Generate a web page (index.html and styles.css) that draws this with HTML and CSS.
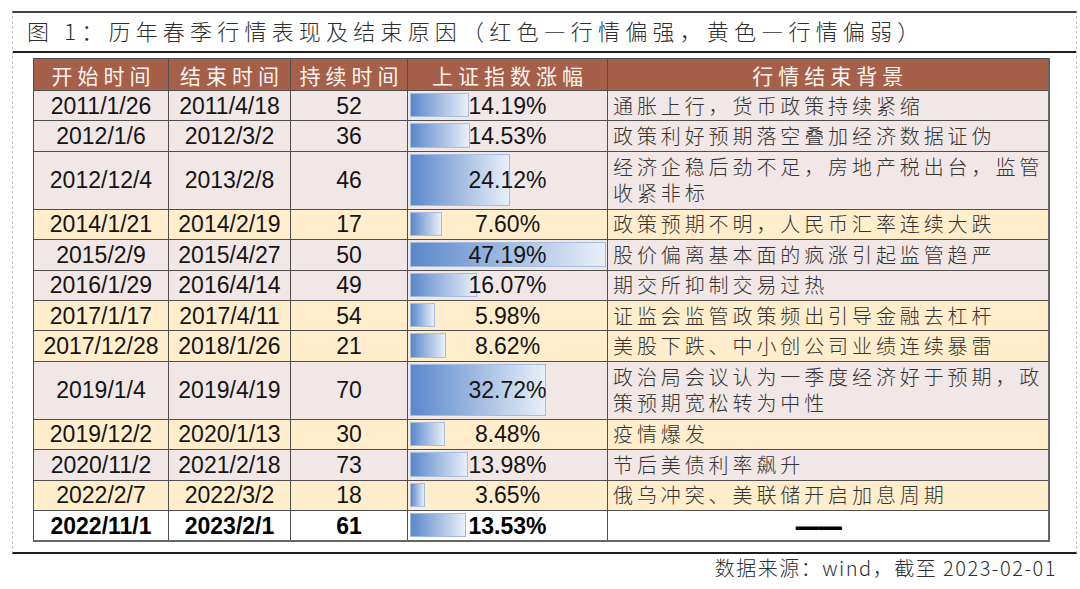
FILE: index.html
```html
<!DOCTYPE html>
<html lang="zh-CN">
<head>
<meta charset="utf-8">
<title>历年春季行情表现及结束原因</title>
<link rel="stylesheet" href="styles.css">
</head>
<body>
<div class="frame">
  <div class="title">图 1：历年春季行情表现及结束原因（红色—行情偏强，黄色—行情偏弱）</div>
  <div class="table-wrap">
    <table class="data">
      <colgroup>
        <col class="c1"><col class="c2"><col class="c3"><col class="c4"><col class="c5">
      </colgroup>
      <thead>
        <tr class="head">
          <th>开始时间</th><th>结束时间</th><th>持续时间</th><th>上证指数涨幅</th><th>行情结束背景</th>
        </tr>
      </thead>
      <tbody>
        <tr class="red"><td>2011/1/26</td><td>2011/4/18</td><td>52</td><td class="pct"><span class="bar" style="width:59px"></span><span class="val">14.19%</span></td><td class="desc">通胀上行，货币政策持续紧缩</td></tr>
        <tr class="red"><td>2012/1/6</td><td>2012/3/2</td><td>36</td><td class="pct"><span class="bar" style="width:60px"></span><span class="val">14.53%</span></td><td class="desc">政策利好预期落空叠加经济数据证伪</td></tr>
        <tr class="red tall"><td>2012/12/4</td><td>2013/2/8</td><td>46</td><td class="pct"><span class="bar" style="width:100px"></span><span class="val">24.12%</span></td><td class="desc">经济企稳后劲不足，房地产税出台，监管收紧非标</td></tr>
        <tr class="yellow"><td>2014/1/21</td><td>2014/2/19</td><td>17</td><td class="pct"><span class="bar" style="width:32px"></span><span class="val">7.60%</span></td><td class="desc">政策预期不明，人民币汇率连续大跌</td></tr>
        <tr class="red"><td>2015/2/9</td><td>2015/4/27</td><td>50</td><td class="pct"><span class="bar" style="width:196px"></span><span class="val">47.19%</span></td><td class="desc">股价偏离基本面的疯涨引起监管趋严</td></tr>
        <tr class="red"><td>2016/1/29</td><td>2016/4/14</td><td>49</td><td class="pct"><span class="bar" style="width:67px"></span><span class="val">16.07%</span></td><td class="desc">期交所抑制交易过热</td></tr>
        <tr class="yellow"><td>2017/1/17</td><td>2017/4/11</td><td>54</td><td class="pct"><span class="bar" style="width:25px"></span><span class="val">5.98%</span></td><td class="desc">证监会监管政策频出引导金融去杠杆</td></tr>
        <tr class="yellow"><td>2017/12/28</td><td>2018/1/26</td><td>21</td><td class="pct"><span class="bar" style="width:36px"></span><span class="val">8.62%</span></td><td class="desc">美股下跌、中小创公司业绩连续暴雷</td></tr>
        <tr class="red tall"><td>2019/1/4</td><td>2019/4/19</td><td>70</td><td class="pct"><span class="bar" style="width:136px"></span><span class="val">32.72%</span></td><td class="desc">政治局会议认为一季度经济好于预期，政策预期宽松转为中性</td></tr>
        <tr class="yellow"><td>2019/12/2</td><td>2020/1/13</td><td>30</td><td class="pct"><span class="bar" style="width:35px"></span><span class="val">8.48%</span></td><td class="desc">疫情爆发</td></tr>
        <tr class="red"><td>2020/11/2</td><td>2021/2/18</td><td>73</td><td class="pct"><span class="bar" style="width:58px"></span><span class="val">13.98%</span></td><td class="desc">节后美债利率飙升</td></tr>
        <tr class="yellow"><td>2022/2/7</td><td>2022/3/2</td><td>18</td><td class="pct"><span class="bar" style="width:15px"></span><span class="val">3.65%</span></td><td class="desc">俄乌冲突、美联储开启加息周期</td></tr>
        <tr class="current"><td>2022/11/1</td><td>2023/2/1</td><td>61</td><td class="pct"><span class="bar" style="width:56px"></span><span class="val">13.53%</span></td><td class="dash">——</td></tr>
      </tbody>
    </table>
  </div>
</div>
<div class="source">数据来源：wind，截至 2023-02-01</div>
</body>
</html>
```

FILE: styles.css
```css
html, body {
  margin: 0;
  padding: 0;
  background: #ffffff;
}

body {
  padding: 11px 0 0 12px;
}

.frame {
  width: 1063px;
  border-top: 2px solid #444;
  border-bottom: 2px solid #1e1e1e;
  border-left: 1px dashed #c4c4c4;
  border-right: 1px dashed #c4c4c4;
}

.title {
  height: 38px;
  line-height: 35px;
  padding-left: 14px;
  font-family: "Noto Sans CJK SC", "Noto Sans", sans-serif;
  font-weight: 300;
  font-size: 22px;
  letter-spacing: 5.2px;
  color: #2e2e2e;
  border-bottom: 2px solid #1e1e1e;
  white-space: nowrap;
}

.table-wrap {
  padding: 5px 0 10px 20px;
}

.data {
  border-collapse: collapse;
  table-layout: fixed;
  width: 1015px;
  border-right: 2px solid #666;
  border-bottom: 2px solid #666;
}

.c1 { width: 135px; }
.c2 { width: 122px; }
.c3 { width: 117px; }
.c4 { width: 200px; }
.c5 { width: 441px; }

.data th,
.data td {
  border: 1px solid #4e4e4e;
  padding: 0;
  text-align: center;
  vertical-align: middle;
}

.head th {
  height: 31px;
  background: #a65f48;
  color: #fbf4f1;
  font-family: "Noto Sans CJK SC", "Noto Sans", sans-serif;
  font-weight: 400;
  font-size: 21px;
  letter-spacing: 5px;
  line-height: 28px;
  padding-left: 5px;
}

.data td {
  height: 29.4px;
  font-family: "Liberation Sans", Arial, sans-serif;
  font-size: 23px;
  line-height: 26px;
  color: #141414;
}

.data tr.tall td {
  height: 57px;
}

.red td { background: #f0e7e6; }
.yellow td { background: #ffedcc; }
.current td { background: #ffffff; font-weight: 700; color: #000; }

.pct {
  position: relative;
}

.bar {
  position: absolute;
  left: 2px;
  top: 2px;
  bottom: 3px;
  box-sizing: border-box;
  border: 1px solid #a5bde2;
  background: linear-gradient(to right, #5a88cb, #e9eff8);
}

.val {
  position: relative;
}

.data td.desc {
  text-align: left;
  padding-left: 5px;
  font-family: "Noto Sans CJK SC", "Noto Sans", sans-serif;
  font-weight: 300;
  font-size: 20px;
  letter-spacing: 3.9px;
  line-height: 26px;
  color: #333;
}

.data td.dash {
  font-family: "Liberation Sans", Arial, sans-serif;
  font-weight: 700;
  letter-spacing: 0;
  padding-right: 18px;
  text-shadow: 0 1px 0 #000;
}

.source {
  width: 1045px;
  text-align: right;
  padding-top: 1px;
  font-family: "Noto Sans CJK SC", "Noto Sans", sans-serif;
  font-weight: 300;
  font-size: 20px;
  letter-spacing: 1.5px;
  line-height: 26px;
  color: #2e2e2e;
}
```
